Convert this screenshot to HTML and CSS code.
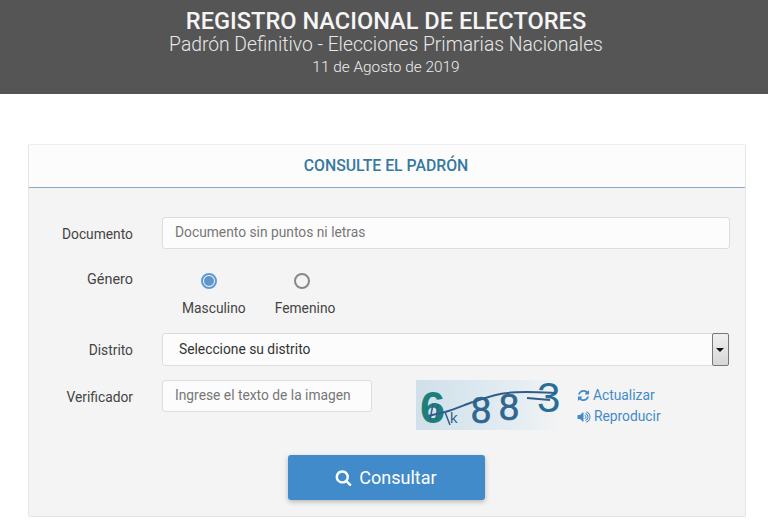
FILE: index.html
```html
<!DOCTYPE html>
<html lang="es">
<head>
    <meta charset="utf-8">
    <title>Registro Nacional de Electores</title>
    <link rel="stylesheet" href="styles.css">
</head>
<body>
    <header class="banner">
        <h1>REGISTRO NACIONAL DE ELECTORES</h1>
        <h2>Padrón Definitivo - Elecciones Primarias Nacionales</h2>
        <p>11 de Agosto de 2019</p>
    </header>

    <section class="panel">
        <div class="panel-head">CONSULTE EL PADRÓN</div>
        <form class="panel-body">
            <!-- Documento -->
            <div class="row row-doc">
                <label class="row-label" for="documento">Documento</label>
                <input class="field field-wide" type="text" id="documento" placeholder="Documento sin puntos ni letras">
            </div>

            <!-- Genero -->
            <div class="row row-gender">
                <span class="row-label">Género</span>
                <div class="gender-options">
                    <label class="gender-option option-m">
                        <input type="radio" name="genero" checked>
                        <span>Masculino</span>
                    </label>
                    <label class="gender-option option-f">
                        <input type="radio" name="genero">
                        <span>Femenino</span>
                    </label>
                </div>
            </div>

            <!-- Distrito -->
            <div class="row row-district">
                <label class="row-label" for="distrito">Distrito</label>
                <div class="select-box" id="distrito">
                    <span class="select-value">Seleccione su distrito</span>
                    <span class="select-arrow"></span>
                </div>
            </div>

            <!-- Verificador -->
            <div class="row row-captcha">
                <label class="row-label" for="verificador">Verificador</label>
                <input class="field field-captcha" type="text" id="verificador" placeholder="Ingrese el texto de la imagen">
                <svg class="captcha" width="145" height="50" viewBox="0 0 145 50">
                    <defs>
                        <linearGradient id="captchaBg" x1="0" y1="0" x2="1" y2="0">
                            <stop offset="0" stop-color="#cfe0ea"/>
                            <stop offset="0.75" stop-color="#e6eef3"/>
                            <stop offset="1" stop-color="#f3f4f5"/>
                        </linearGradient>
                    </defs>
                    <rect width="145" height="50" rx="1" fill="url(#captchaBg)"/>
                    <text class="captcha-bold" x="4" y="43" font-size="45" fill="#1e7f7a">6</text>
                    <text class="captcha-char" x="34" y="43" font-size="15" fill="#2f5f88">k</text>
                    <text class="captcha-char" x="55" y="43" font-size="36" fill="#2f6690" stroke="#2f6690" stroke-width="0.7">8</text>
                    <text class="captcha-char" x="83" y="40" font-size="36" fill="#2f6690" stroke="#2f6690" stroke-width="0.7">8</text>
                    <text class="captcha-char" x="121" y="32" font-size="42" fill="#2a6d96">3</text>
                    <path d="M12 36 L29 32 C40 29 50 24 57 22 C72 17 80 14 91 13 C105 11 120 12 140 13" fill="none" stroke="#2f5f88" stroke-width="2"/>
                    <path d="M111 18 L134 20" fill="none" stroke="#2f5f88" stroke-width="2"/>
                    <path d="M14 40 L17 24 M20 40 L22 24 M29 32 L34 45" fill="none" stroke="#2f5f88" stroke-width="1.500"/>
                </svg>
                <div class="captcha-links">
                    <a href="#">
                        <svg class="link-icon" width="13" height="13" viewBox="0 0 1792 1792"><path d="M1639 1056q0 5-1 7-64 268-268 434.500t-478 166.500q-146 0-282.500-55t-243.500-157l-129 129q-19 19-45 19t-45-19-19-45v-448q0-26 19-45t45-19h448q26 0 45 19t19 45-19 45l-137 137q71 66 161 102t187 36q134 0 250-65t186-179q11-17 53-117 8-23 30-23h192q13 0 22.500 9.500t9.500 22.500zm25-800v448q0 26-19 45t-45 19h-448q-26 0-45-19t-19-45 19-45l138-138q-148-137-349-137-134 0-250 65t-186 179q-11 17-53 117-8 23-30 23h-199q-13 0-22.500-9.500t-9.500-22.500v-7q65-268 270-434.500t480-166.500q146 0 284 55.500t245 156.500l130-129q19-19 45-19t45 19 19 45z"/></svg>
                        Actualizar
                    </a>
                    <a href="#">
                        <svg class="link-icon" width="14" height="14" viewBox="0 0 1792 1792"><path d="M832 352v1088q0 26-19 45t-45 19-45-19l-333-333h-262q-26 0-45-19t-19-45v-384q0-26 19-45t45-19h262l333-333q19-19 45-19t45 19 19 45zm384 544q0 76-42.500 141.500t-112.500 93.500q-10 5-25 5-26 0-45-18.500t-19-45.500q0-21 12-35.500t29-25 34-23 29-36 12-56.500-12-56.500-29-36-34-23-29-25-12-35.500q0-27 19-45.500t45-18.500q15 0 25 5 70 27 112.500 93t42.500 142zm256 0q0 153-85 282.500t-225 188.500q-13 5-25 5-27 0-46-19t-19-45q0-39 39-59 56-29 76-44 74-54 115.500-135.500t41.500-173.500-41.500-173.500-115.500-135.500q-20-15-76-44-39-20-39-59 0-26 19-45t45-19q13 0 26 5 140 59 225 188.500t85 282.500zm256 0q0 230-127 422.500t-338 283.500q-13 5-26 5-26 0-45-19t-19-45q0-36 39-59 7-4 22.500-10.500t22.500-10.500q46-25 82-51 123-91 192-227t69-289-69-289-192-227q-36-26-82-51-7-4-22.500-10.500t-22.500-10.500q-39-23-39-59 0-26 19-45t45-19q13 0 26 5 211 91 338 283.500t127 422.500z"/></svg>
                        Reproducir
                    </a>
                </div>
            </div>

            <div class="actions">
                <button type="button" class="btn-submit">
                    <svg width="17" height="17" viewBox="0 0 1792 1792"><path d="M1216 832q0-185-131.500-316.500t-316.500-131.500-316.500 131.500-131.500 316.500 131.500 316.500 316.500 131.500 316.500-131.500 131.500-316.500zm512 832q0 52-38 90t-90 38q-54 0-90-38l-343-342q-179 124-399 124-143 0-273.500-55.500t-225-150-150-225-55.500-273.500 55.500-273.500 150-225 225-150 273.500-55.500 273.500 55.500 225 150 150 225 55.500 273.500q0 220-124 399l343 343q37 37 37 90z" fill="#fff"/></svg>
                    Consultar
                </button>
            </div>
        </form>
    </section>
</body>
</html>
```

FILE: styles.css
```css
* {
    box-sizing: border-box;
}

body {
    margin: 0;
    background-color: #fff;
    color: #333;
    font-family: Roboto, "Liberation Sans", sans-serif;
    font-size: 13.8px;
    overflow: hidden;
}

.banner {
    height: 94px;
    padding: 9px 0 0 4px;
    background-color: #555;
    color: #fff;
    text-align: center;
}

.banner h1 {
    margin: 0;
    font-size: 23.6px;
    font-weight: 500;
    line-height: 25px;
    color: #f5f5f5;
}

.banner h2 {
    margin: 1px 0 0;
    font-size: 19.3px;
    font-weight: 300;
    line-height: 20px;
    color: #e8e8e8;
}

.banner p {
    margin: 3px 0 0;
    font-size: 15.400px;
    font-weight: 300;
    line-height: 18px;
    color: #eee;
}

.panel {
    width: 718px;
    height: 373px;
    margin: 50px 0 0 28px;
    background-color: #f4f4f4;
    border: 1px solid #e6e6e6;
    border-top-color: #eee;
    border-radius: 2px;
}

.panel-head {
    height: 43px;
    padding-right: 2px;
    background-color: #fcfcfc;
    border-bottom: 1px solid #88a8cc;
    color: #36799f;
    font-size: 15.8px;
    font-weight: 500;
    line-height: 42px;
    text-align: center;
}

.panel-body {
    padding-top: 29px;
}

.row {
    display: flex;
    align-items: flex-start;
}

.row-label {
    flex: none;
    width: 104px;
    margin-right: 29px;
    text-align: right;
    color: #444;
}

.field {
    height: 32px;
    padding: 0 12px 2px;
    background-color: #fcfcfc;
    border: 1px solid #ddd;
    border-radius: 3px;
    color: #555;
    font-family: inherit;
    font-size: 13.8px;
}

.field::placeholder {
    color: #777;
    opacity: 1;
}

.field-wide {
    width: 568px;
}

.row-doc .row-label {
    line-height: 32px;
    padding-top: 1px;
}

.row-gender {
    height: 83px;
    padding-top: 21px;
}

.row-gender .row-label {
    line-height: 18px;
    font-size: 14.4px;
}

.gender-options {
    display: flex;
}

.gender-option {
    display: flex;
    flex-direction: column;
    align-items: center;
    color: #444;
}

.gender-option input {
    appearance: none;
    width: 16px;
    height: 16px;
    margin: 2px 0 11px;
    padding: 1px;
    background-color: #f4f4f4;
    border: 2px solid #888;
    border-radius: 50%;
}

.gender-option input:checked {
    background-color: #5f96c6;
    background-clip: content-box;
    border-color: #5a9ad8;
}

.option-m {
    margin-left: 20px;
}

.option-m input {
    margin-right: 9px;
}

.option-f {
    margin-left: 29px;
}

.option-f input {
    margin-right: 7px;
}

.row-district .row-label {
    line-height: 34px;
}

.select-box {
    display: flex;
    width: 567px;
    height: 33px;
    background-color: #fcfcfc;
    border: 1px solid #ddd;
    border-radius: 3px;
}

.select-value {
    flex: 1;
    padding-left: 16px;
    line-height: 30px;
    color: #333;
}

.select-arrow {
    position: relative;
    flex: none;
    width: 17px;
    margin: -1px -1px -1px 0;
    background: linear-gradient(#f0f0f0, #d6d6d6);
    border: 1px solid #777;
    border-radius: 2px;
}

.select-arrow::after {
    content: "";
    position: absolute;
    top: 14px;
    left: 3px;
    border-style: solid;
    border-width: 4px 4px 0;
    border-color: #111 transparent transparent;
}

.row-captcha {
    margin-top: 13px;
}

.row-captcha .row-label {
    line-height: 34px;
}

.field-captcha {
    width: 210px;
    margin-right: 44px;
}

.captcha {
    flex: none;
    margin-right: 16px;
    overflow: visible;
}

.captcha-char {
    font-family: "Liberation Sans", sans-serif;
}

.captcha-bold {
    font-family: "Liberation Sans", sans-serif;
    font-weight: 700;
}

.captcha-links {
    display: flex;
    flex-direction: column;
    padding-top: 5px;
}

.captcha-links a {
    display: flex;
    align-items: center;
    gap: 3px;
    color: #428bca;
    font-size: 13.8px;
    line-height: 21px;
    text-decoration: none;
}

.link-icon {
    fill: #428bca;
}

.actions {
    margin-top: 25px;
    text-align: center;
    padding-right: 2px;
}

.btn-submit {
    display: inline-flex;
    align-items: center;
    justify-content: center;
    gap: 7px;
    width: 197px;
    height: 45px;
    background-color: #428bca;
    border: none;
    border-radius: 3px;
    box-shadow: 0 2px 5px rgba(0, 0, 0, 0.25);
    color: #fff;
    font-family: inherit;
    font-size: 18px;
    cursor: pointer;
}
```
